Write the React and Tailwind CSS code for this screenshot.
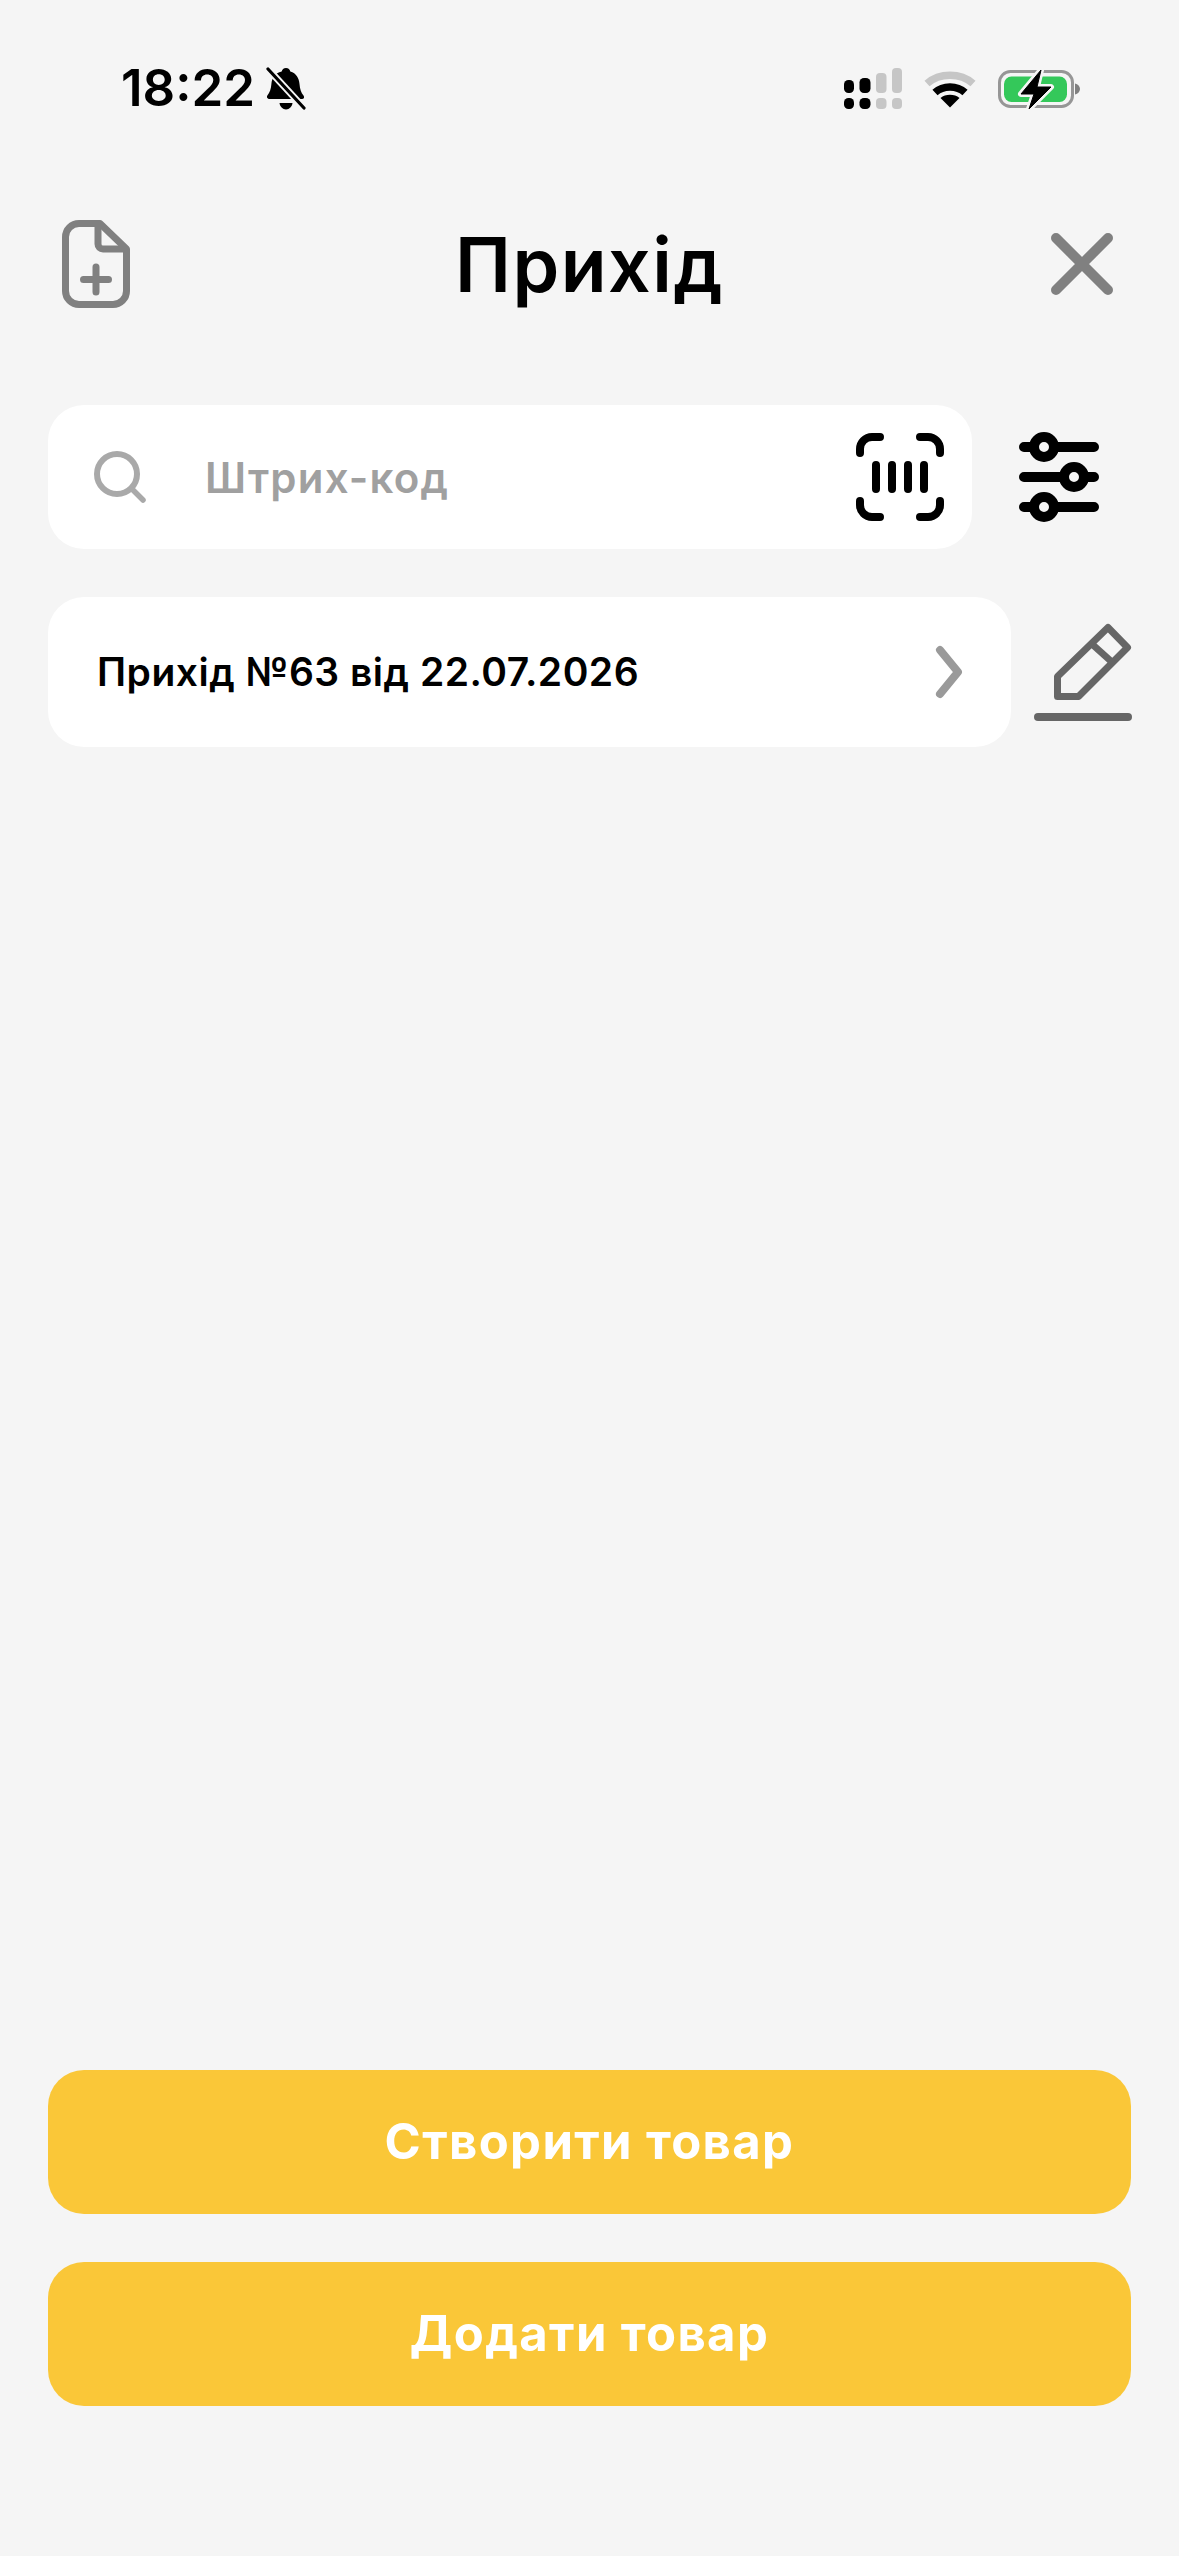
import React from 'react';

const BellOff = () => (
  <svg width="42" height="44" viewBox="0 0 42 44" className="block">
    <path d="M21 1c2.400 0 4 1.600 4.300 3.500 6 1.800 8.700 6.500 9.200 12.500.4 5 1.500 8.500 4 11.500 1.300 1.600.6 3.500-1.500 3.500H5c-2.800 0-3.800-2-2.500-3.800 2.300-3 3.500-6 3.900-11.200.5-6 3.400-10.700 10.300-12.500C17 2.600 18.600 1 21 1z" fill="#000" />
    <path d="M14.500 36h13c-.4 3.500-3.100 6.500-6.500 6.500s-6.100-3-6.500-6.500z" fill="#000" />
    <path d="M3 2 L39 41" stroke="#f5f5f5" strokeWidth="7" />
    <path d="M3 2 L39 41" stroke="#000" strokeWidth="3.200" strokeLinecap="round" />
  </svg>
);

const Signal = () => (
  <svg width="58" height="41" viewBox="0 0 58 41" className="block">
    <rect x="0" y="12" width="10" height="13" rx="4.500" fill="#000" />
    <rect x="15.500" y="10" width="11" height="15" rx="4.500" fill="#000" />
    <rect x="32" y="5" width="10.500" height="20" rx="4" fill="#c6c6c6" />
    <rect x="48" y="0" width="10" height="25" rx="4" fill="#c6c6c6" />
    <rect x="0" y="30" width="10" height="11" rx="4.500" fill="#000" />
    <rect x="15.500" y="30" width="11" height="11" rx="4.500" fill="#000" />
    <rect x="32" y="30" width="10.500" height="11" rx="4" fill="#c6c6c6" />
    <rect x="48" y="30" width="10" height="11" rx="4" fill="#c6c6c6" />
  </svg>
);

const Wifi = () => (
  <svg width="52" height="38" viewBox="0 0 52 38" className="block">
    <path d="M3 13.500C15.500 2.500 36.500 2.500 49 13.500" fill="none" stroke="#c6c6c6" strokeWidth="7.500" />
    <path d="M11 22.500C19 15 33 15 41 22.500" fill="none" stroke="#000" strokeWidth="7.500" />
    <path d="M26 37.500L16.500 28C21.500 23.800 30.500 23.800 35.500 28z" fill="#000" />
  </svg>
);

const Battery = () => (
  <svg width="84" height="42" viewBox="0 0 84 42" className="block">
    <rect x="2.500" y="3.500" width="73" height="35" rx="11" fill="none" stroke="#969696" strokeWidth="3" />
    <rect x="7" y="8.500" width="63" height="25.500" rx="7.500" fill="#34c85a" />
    <path d="M78 15.500c3 .8 5 3 5 5.500s-2 4.700-5 5.500z" fill="#808080" />
    <path d="M44 2L24 26H37L32 41L54 19H40z" fill="#f5f5f5" stroke="#f5f5f5" strokeWidth="6" strokeLinejoin="round" />
    <path d="M44 2L24 26H37L32 41L54 19H40z" fill="#000" stroke="#000" strokeWidth="1" strokeLinejoin="round" />
  </svg>
);

const FilePlus = () => (
  <svg width="68" height="88" viewBox="0 0 68 88" className="block">
    <path d="M38 3.500H17A13.500 13.500 0 0 0 3.500 17v54A13.500 13.500 0 0 0 17 84.500h34A13.500 13.500 0 0 0 64.500 71V29z" fill="none" stroke="#808080" strokeWidth="7" strokeLinejoin="round" />
    <path d="M36 3.500V24a5 5 0 0 0 5 5h23.500" fill="none" stroke="#808080" strokeWidth="7" strokeLinejoin="round" />
    <path d="M34 47v25M21.500 59.500h25" fill="none" stroke="#808080" strokeWidth="7" strokeLinecap="round" />
  </svg>
);

const Close = () => (
  <svg width="62" height="62" viewBox="0 0 62 62" className="block">
    <path d="M5 5l52 52M57 5L5 57" stroke="#808080" strokeWidth="10" strokeLinecap="round" />
  </svg>
);

const Search = () => (
  <svg width="52" height="52" viewBox="0 0 52 52" className="block">
    <circle cx="23" cy="23" r="20" fill="none" stroke="#a9a9a9" strokeWidth="6" />
    <path d="M39 39l10 10" stroke="#a9a9a9" strokeWidth="5.500" strokeLinecap="round" />
  </svg>
);

const Scan = () => (
  <svg width="88" height="88" viewBox="0 0 88 88" className="block">
    <g fill="none" stroke="#000" strokeWidth="8" strokeLinecap="round">
      <path d="M4 20V16A12 12 0 0 1 16 4h8M64 4h8a12 12 0 0 1 12 12v4M84 68v4a12 12 0 0 1-12 12h-8M24 84h-8A12 12 0 0 1 4 72v-4" />
      <path d="M20 32v24M36 32v24M52 32v24M68 32v24" />
    </g>
  </svg>
);

const Sliders = () => (
  <svg width="80" height="90" viewBox="0 0 80 90" className="block">
    <g fill="none" stroke="#000" strokeWidth="10" strokeLinecap="round">
      <path d="M5 15h70M5 45h70M5 75h70" />
    </g>
    <g fill="#f5f5f5" stroke="#000" strokeWidth="10">
      <circle cx="25" cy="15" r="10" />
      <circle cx="55" cy="45" r="10" />
      <circle cx="25" cy="75" r="10" />
    </g>
  </svg>
);

const Chevron = () => (
  <svg width="28" height="54" viewBox="0 0 28 54" className="block">
    <path d="M5 5L23 27L5 49" fill="none" stroke="#9a9a9a" strokeWidth="8" strokeLinecap="round" strokeLinejoin="round" />
  </svg>
);

const Pencil = () => (
  <svg width="98" height="99" viewBox="0 0 98 99" className="block">
    <g fill="none" stroke="#666666" strokeWidth="7" strokeLinejoin="round">
      <path d="M23.500 53.500L74 4.500L93.500 24.500L44.500 73.500H23.500z" />
      <path d="M59 22L79 40" />
    </g>
    <path d="M4 94h90" stroke="#666666" strokeWidth="8" strokeLinecap="round" />
  </svg>
);

const App = () => {
  return (
    <div className="w-[1179px] h-[2556px] bg-[#f5f5f5] flex flex-col font-['Inter',sans-serif]">
      <div className="flex justify-between items-center pl-[121px] pr-[98px] pt-[65px] h-[112px]">
        <div className="flex items-center gap-[10px]">
          <span className="text-[51px] leading-none font-semibold text-black pb-[3px]">18:22</span>
          <BellOff />
        </div>
        <div className="flex items-center">
          <Signal />
          <div className="ml-[22px] mr-[21px]"><Wifi /></div>
          <Battery />
        </div>
      </div>

      <div className="grid grid-cols-[1fr_auto_1fr] items-center pl-[62px] pr-[66px] mt-[108px]">
        <FilePlus />
        <h1 className="ml-[4px] text-[75px] leading-none font-semibold text-black tracking-[1.500px]">Прихід</h1>
        <div className="flex justify-end"><Close /></div>
      </div>

      <div className="flex items-center justify-between pl-[48px] pr-[80px] mt-[97px]">
        <div className="w-[924px] h-[144px] bg-white rounded-[36px] flex items-center pl-[46px] pr-[28px]">
          <Search />
          <span className="ml-[59px] flex-1 text-[42px] font-semibold text-[#a0a0a0] tracking-[1.200px]">Штрих-код</span>
          <Scan />
        </div>
        <Sliders />
      </div>

      <div className="flex items-center justify-between pl-[48px] pr-[47px] mt-[48px]">
        <div className="w-[963px] h-[150px] bg-white rounded-[36px] flex items-center justify-between pl-[49px] pr-[48px]">
          <span className="text-[39px] font-semibold text-black tracking-[0.500px]">Прихід №63 від 22.07.2026</span>
          <Chevron />
        </div>
        <Pencil />
      </div>

      <div className="flex-1" />

      <div className="flex flex-col gap-[48px] px-[48px] pb-[150px]">
        <button className="h-[144px] rounded-[36px] bg-[#fac738] text-white text-[49px] font-bold tracking-[1.400px]">Створити товар</button>
        <button className="h-[144px] rounded-[36px] bg-[#fac738] text-white text-[49px] font-bold tracking-[1.400px]">Додати товар</button>
      </div>
    </div>
  );
};

export default App;
